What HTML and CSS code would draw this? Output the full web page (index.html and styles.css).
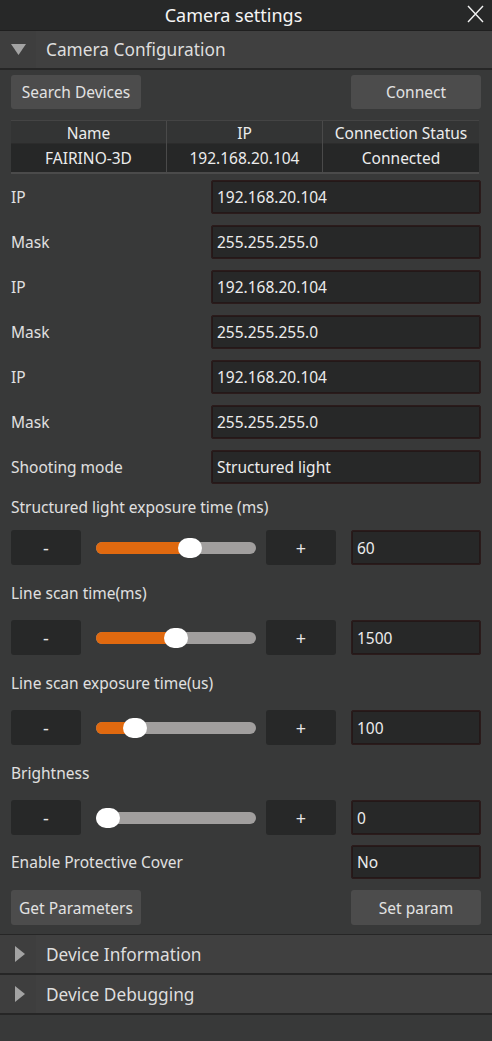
FILE: index.html
```html
<!DOCTYPE html>
<html>
<head>
<meta charset="utf-8">
<link rel="stylesheet" href="styles.css">
</head>
<body>
<div class="window">
  <div class="titlebar">
    <span class="title">Camera settings</span>
    <svg class="close" width="17" height="18" viewBox="0 0 17 18"><path d="M1 1 L16 17 M16 1 L1 17" stroke="#f2f2f2" stroke-width="1.4" fill="none"/></svg>
  </div>

  <div class="section-header">
    <span class="arrow-box"><svg width="15" height="11" viewBox="0 0 15 11"><path d="M0 0 H15 L7.5 11 Z" fill="#a3a3a3"/></svg></span>
    <span class="section-title">Camera Configuration</span>
  </div>

  <div class="content">
    <div class="btn-row">
      <button class="btn">Search Devices</button>
      <button class="btn">Connect</button>
    </div>

    <div class="table">
      <div class="tr head">
        <div class="td">Name</div>
        <div class="td">IP</div>
        <div class="td">Connection Status</div>
      </div>
      <div class="tr body">
        <div class="td">FAIRINO-3D</div>
        <div class="td">192.168.20.104</div>
        <div class="td">Connected</div>
      </div>
    </div>

    <div class="field first"><span class="label">IP</span><div class="input wide">192.168.20.104</div></div>
    <div class="field"><span class="label">Mask</span><div class="input wide">255.255.255.0</div></div>
    <div class="field"><span class="label">IP</span><div class="input wide">192.168.20.104</div></div>
    <div class="field"><span class="label">Mask</span><div class="input wide">255.255.255.0</div></div>
    <div class="field"><span class="label">IP</span><div class="input wide">192.168.20.104</div></div>
    <div class="field"><span class="label">Mask</span><div class="input wide">255.255.255.0</div></div>
    <div class="field"><span class="label">Shooting mode</span><div class="input wide">Structured light</div></div>

    <div class="group-label first">Structured light exposure time (ms)</div>
    <div class="slider-row">
      <div class="step">-</div>
      <div class="slider"><div class="fill" style="width:94px"></div><div class="thumb" style="left:82px"></div></div>
      <div class="step">+</div>
      <div class="input narrow">60</div>
    </div>

    <div class="group-label">Line scan time(ms)</div>
    <div class="slider-row">
      <div class="step">-</div>
      <div class="slider"><div class="fill" style="width:80px"></div><div class="thumb" style="left:68px"></div></div>
      <div class="step">+</div>
      <div class="input narrow">1500</div>
    </div>

    <div class="group-label">Line scan exposure time(us)</div>
    <div class="slider-row">
      <div class="step">-</div>
      <div class="slider"><div class="fill" style="width:39px"></div><div class="thumb" style="left:27px"></div></div>
      <div class="step">+</div>
      <div class="input narrow">100</div>
    </div>

    <div class="group-label">Brightness</div>
    <div class="slider-row">
      <div class="step">-</div>
      <div class="slider"><div class="fill" style="width:0px"></div><div class="thumb" style="left:0px"></div></div>
      <div class="step">+</div>
      <div class="input narrow">0</div>
    </div>

    <div class="field cover"><span class="label">Enable Protective Cover</span><div class="input narrow short">No</div></div>

    <div class="btn-row bottom">
      <button class="btn">Get Parameters</button>
      <button class="btn">Set param</button>
    </div>
  </div>

  <div class="section-header collapsed">
    <span class="arrow-box"><svg width="10" height="16" viewBox="0 0 10 16"><path d="M0 0 L10 8 L0 16 Z" fill="#a3a3a3"/></svg></span>
    <span class="section-title">Device Information</span>
  </div>
  <div class="section-header collapsed">
    <span class="arrow-box"><svg width="10" height="16" viewBox="0 0 10 16"><path d="M0 0 L10 8 L0 16 Z" fill="#a3a3a3"/></svg></span>
    <span class="section-title">Device Debugging</span>
  </div>
</div>
</body>
</html>
```

FILE: styles.css
```css
* { box-sizing: border-box; }
html, body {
  margin: 0;
  padding: 0;
  background: #383939;
}
body {
  font-family: "Noto Sans", "DejaVu Sans", sans-serif;
  color: #e2e2e2;
  font-size: 15.5px;
}
.window {
  width: 492px;
  height: 1041px;
  background: #383939;
  overflow: hidden;
}
.titlebar {
  height: 31px;
  background: #272828;
  border-bottom: 1px solid #1f1f1f;
  display: flex;
  align-items: center;
  justify-content: center;
  padding-right: 25px;
  position: relative;
}
.title {
  color: #f5f5f5;
  font-size: 18px;
}
.close {
  position: absolute;
  right: 8px;
  top: 5px;
}
.section-header {
  height: 39px;
  background: #404040;
  border-bottom: 2px solid #262626;
  display: flex;
  align-items: center;
}
.section-header.collapsed {
  height: 40px;
}
.arrow-box {
  width: 36px;
  height: 100%;
  display: flex;
  align-items: center;
  padding-left: 11px;
  background: #3e3e3e;
}
.collapsed .arrow-box {
  padding-left: 15px;
}
.section-title {
  margin-left: 10px;
  font-size: 17.3px;
  color: #dedede;
}
.content {
  padding: 5px 11px 9px 11px;
  border-bottom: 1px solid #262626;
}
.btn-row {
  display: flex;
  justify-content: space-between;
}
.btn {
  width: 130px;
  height: 34px;
  background: #4c4c4c;
  border: none;
  border-radius: 3px;
  color: #e2e2e2;
  font-family: inherit;
  font-size: 15.5px;
  padding: 0;
}
.btn-row.bottom {
  margin-top: 11px;
}
.btn-row.bottom .btn {
  height: 35px;
}
.table {
  margin-top: 11px;
  width: 468px;
  border-bottom: 2px solid #4b4b4b;
}
.tr {
  display: grid;
  grid-template-columns: 155px 156px 157px;
}
.tr.head {
  height: 23px;
  background: #333434;
  border-top: 1px solid #444;
}
.tr.body {
  height: 29px;
  background: #262727;
  border-top: 1px solid #2c2c2c;
}
.td {
  display: flex;
  align-items: center;
  justify-content: center;
  color: #ececec;
}
.td + .td {
  border-left: 1px solid #4a4a4a;
}
.head .td {
  padding-top: 1px;
}
.field {
  display: flex;
  justify-content: space-between;
  align-items: center;
  margin-top: 11px;
}
.field.first {
  margin-top: 6px;
}
.field.cover {
  margin-top: 10px;
}
.label {
  color: #e0e0e0;
}
.input {
  height: 34px;
  background: #272828;
  border: 1px solid #2b1b1b;
  box-shadow: inset 0 0 0 1px #231818;
  border-radius: 2px;
  display: flex;
  align-items: center;
  padding-left: 5px;
  color: #ececec;
}
.input.wide {
  width: 270px;
}
.input.narrow {
  width: 130px;
  height: 35px;
}
.input.narrow.short {
  height: 34px;
}
.group-label {
  height: 24px;
  display: flex;
  align-items: center;
  margin-top: 16px;
  margin-bottom: 15px;
  color: #e0e0e0;
}
.group-label.first {
  margin-top: 11px;
  margin-bottom: 11px;
}
.slider-row {
  display: flex;
  align-items: center;
  height: 35px;
}
.step {
  width: 70px;
  height: 35px;
  background: #272828;
  border-radius: 3px;
  display: flex;
  align-items: center;
  justify-content: center;
  font-size: 18px;
  color: #e6e6e6;
}
.slider {
  position: relative;
  width: 160px;
  height: 12px;
  margin: 0 10px 0 15px;
  background: #a19f9e;
  border-radius: 6px;
}
.fill {
  position: absolute;
  left: 0;
  top: 0;
  height: 12px;
  background: #e0690f;
  border-radius: 6px 0 0 6px;
}
.thumb {
  position: absolute;
  top: -4px;
  width: 24px;
  height: 20px;
  background: #ffffff;
  border-radius: 10px;
}
.slider-row .input.narrow {
  margin-left: 15px;
}
```
